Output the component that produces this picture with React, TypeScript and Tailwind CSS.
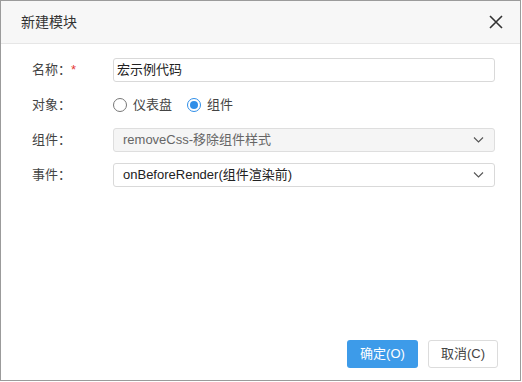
const font = { fontFamily: '"Liberation Sans", "Noto Sans CJK SC", sans-serif' };

function Chevron() {
  return (
    <svg width="11" height="7" viewBox="0 0 11 7" className="absolute right-[10px] top-1/2 -translate-y-1/2">
      <path d="M1 1l4.5 4.5L10 1" fill="none" stroke="#555" strokeWidth="1.1" />
    </svg>
  );
}

function Row({ label, star, children }: { label: string; star?: boolean; children: React.ReactNode }) {
  return (
    <div className="flex h-[24px] items-center">
      <div className="flex w-[112px] shrink-0 pl-[31px] text-[13px] text-[#444] whitespace-nowrap">
        <span>{label}</span>
        {star && <span className="text-[#e53935]">*</span>}
      </div>
      {children}
    </div>
  );
}

function Radio({ checked, label }: { checked?: boolean; label: string }) {
  return (
    <label className="flex items-center gap-[6px] text-[13px] text-[#444]">
      <span
        className={
          "flex h-[14px] w-[14px] items-center justify-center rounded-full border " +
          (checked ? "border-[#2f8ee8]" : "border-[#777]")
        }
      >
        {checked && <span className="h-[8px] w-[8px] rounded-full bg-[#2f8ee8]" />}
      </span>
      {label}
    </label>
  );
}

export default function App() {
  return (
    <div className="h-[382px] w-[522px] bg-white" style={font}>
      <div className="flex h-[381px] w-[521px] flex-col border border-[#9b9b9b] bg-white">
        <div className="flex h-[43px] items-center justify-between border-b border-[#e6e6e6] bg-[#f7f7f7] pl-[20px] pr-[17px]">
          <span className="text-[14px] text-[#333]">新建模块</span>
          <svg width="14" height="14" viewBox="0 0 14 14">
            <path d="M1 1l12 12M13 1L1 13" stroke="#333" strokeWidth="1.6" />
          </svg>
        </div>

        <div className="flex flex-col gap-[11px] pt-[14px]">
          <Row label="名称：" star>
            <div className="flex h-[24px] w-[382px] items-center rounded-[3px] border border-[#d9d9d9] px-[3px] text-[13px] text-[#222]">
              宏示例代码
            </div>
          </Row>
          <Row label="对象：">
            <div className="flex items-center gap-[15px]">
              <Radio label="仪表盘" />
              <Radio label="组件" checked />
            </div>
          </Row>
          <Row label="组件：">
            <div className="relative flex h-[24px] w-[382px] items-center rounded-[3px] border border-[#dedede] bg-[#f5f5f5] pl-[9px] text-[13px] text-[#666]">
              removeCss-移除组件样式
              <Chevron />
            </div>
          </Row>
          <Row label="事件：">
            <div className="relative flex h-[24px] w-[382px] items-center rounded-[3px] border border-[#d9d9d9] bg-white pl-[9px] text-[13px] text-[#222]">
              onBeforeRender(组件渲染前)
              <Chevron />
            </div>
          </Row>
        </div>

        <div className="mt-auto flex justify-end gap-[10px] pb-[12px] pr-[22px]">
          <button className="h-[28px] w-[71px] rounded-[3px] bg-[#3d9be9] text-[13px] text-white">确定(O)</button>
          <button className="h-[28px] w-[70px] rounded-[3px] border border-[#dcdcdc] bg-white text-[13px] text-[#444]">取消(C)</button>
        </div>
      </div>
    </div>
  );
}
